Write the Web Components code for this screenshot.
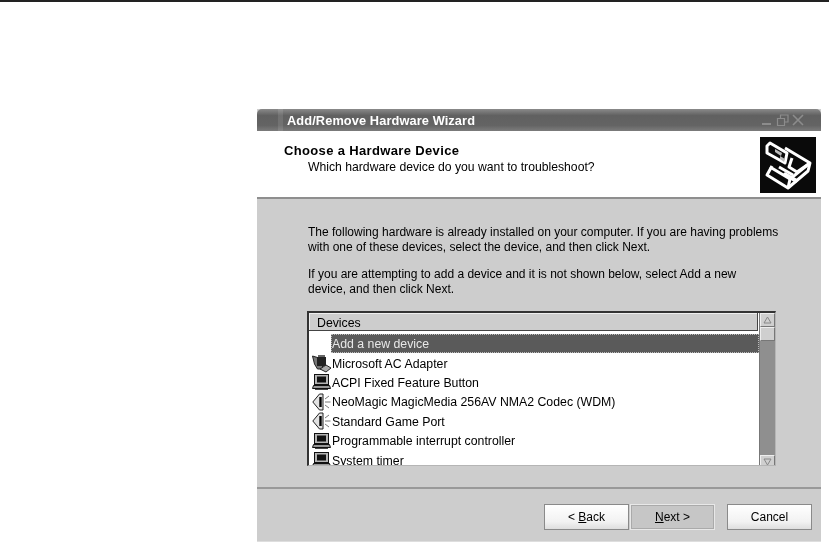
<!DOCTYPE html>
<html>
<head>
<meta charset="utf-8">
<title>Add/Remove Hardware Wizard</title>
<style>
    html, body { margin: 0; padding: 0; background: #fff; }
    body { width: 829px; height: 542px; overflow: hidden; font-family: "Liberation Sans", Arial, sans-serif; }
</style>
</head>
<body>
<page-shot>
    <wizard-window title-text="Add/Remove Hardware Wizard">
        <wizard-header slot="header" heading="Choose a Hardware Device" sub="Which hardware device do you want to troubleshoot?"></wizard-header>
        <p>The following hardware is already installed on your computer. If you are having problems<br>with one of these devices, select the device, and then click Next.</p>
        <p>If you are attempting to add a device and it is not shown below, select Add a new<br>device, and then click Next.</p>
        <device-list>
            <device-row selected>Add a new device</device-row>
            <device-row icon="adapter">Microsoft AC Adapter</device-row>
            <device-row icon="computer">ACPI Fixed Feature Button</device-row>
            <device-row icon="speaker">NeoMagic MagicMedia 256AV NMA2 Codec (WDM)</device-row>
            <device-row icon="speaker">Standard Game Port</device-row>
            <device-row icon="computer">Programmable interrupt controller</device-row>
            <device-row icon="computer">System timer</device-row>
        </device-list>
        <wizard-button slot="buttons" label="Back" key="B" before="&lt; "></wizard-button>
        <wizard-button slot="buttons" label="Next" key="N" after=" &gt;" active></wizard-button>
        <wizard-button slot="buttons" label="Cancel" style="margin-left:11px"></wizard-button>
    </wizard-window>
</page-shot>
<script>
const ICONS = {
    computer: `<svg width="19" height="18" viewBox="0 0 19 18"><rect x="2.5" y="1.5" width="14" height="10" fill="#b5b5b5" stroke="#111"/><rect x="5" y="3.5" width="9" height="6" fill="#111"/><path d="M1.5 12.5h16l1 3H.5z" fill="#999" stroke="#111"/><path d="M3 16.5h13" stroke="#444"/></svg>`,
    speaker: `<svg width="19" height="18" viewBox="0 0 19 18"><path d="M.8 9L7.5 1H11v16H7.5z" fill="#e2e2e2" stroke="#222"/><path d="M8.5 4v10" stroke="#000" stroke-width="2.4"/><path d="M13 6l4-3M13 9h5.5M13 12l4 3" stroke="#777" fill="none"/></svg>`,
    adapter: `<svg width="20" height="20" viewBox="0 0 20 20"><path d="M.5 2l2 8 3 5h5V5z" fill="#777" stroke="#222"/><rect x="5" y="3" width="9" height="9" fill="#222"/><path d="M6 2h7" stroke="#666" stroke-width="2"/><path d="M8 15l6-4 5 3-5 4z" fill="#aaa" stroke="#222"/></svg>`
};

class PageShot extends HTMLElement {
    constructor() {
        super();
        this.attachShadow({ mode: 'open' });
        this.shadowRoot.innerHTML = `
            <style>
                :host { display: block; border-top: 2px solid #222; padding: 107px 8px 0 257px; }
            </style>
            <slot></slot>
        `;
    }
}

class WizardWindow extends HTMLElement {
    constructor() {
        super();
        this.attachShadow({ mode: 'open' });
        const title = this.getAttribute("title-text") || "";
        this.shadowRoot.innerHTML = `
            <style>
                :host {
                    display: flex;
                    flex-direction: column;
                    height: 433px;
                    background: #cdcdcd;
                    font: 12px "Liberation Sans", Arial, sans-serif;
                    color: #000;
                    filter: blur(0.4px);
                }
                #bar {
                    flex: none;
                    display: flex;
                    align-items: center;
                    height: 22px;
                    padding-left: 30px;
                    border-radius: 5px 5px 0 0;
                    background: linear-gradient(#8a8a8a, #606060 30%, #646464 75%, #7c7c7c);
                    color: #fff;
                    font-weight: bold;
                    font-size: 12.8px;
                    letter-spacing: 0.1px;
                    position: relative;
                }
                /* lighter band just before the caption */
                #band { position: absolute; left: 21px; top: 0; bottom: 0; width: 5px; background: rgba(255,255,255,.1); }
                #controls { margin-left: auto; margin-right: 16px; display: block; }
                #middle { flex: 1; padding: 26px 45px 0 51px; display: flex; flex-direction: column; min-height: 0; }
                ::slotted(p) { margin: 0 0 12px; line-height: 15px; white-space: nowrap; }
                #foot {
                    flex: none;
                    height: 55px;
                    box-sizing: border-box;
                    border-top: 2px solid #999;
                    border-bottom: 1px solid #dedede;
                    padding: 15px 9px 0 0;
                    display: flex;
                    justify-content: flex-end;
                    gap: 1px;
                }
            </style>
            <div id="bar">
                <div id="band"></div>
                <span>${title}</span>
                <svg id="controls" width="44" height="14" viewBox="0 0 44 14" fill="none" stroke="#8c8c8c">
                    <path d="M1 11h9" stroke-width="2"/>
                    <path d="M16.5 5.5h7v7h-7zM19.5 5V2h7.5v7h-3" stroke-width="1.2"/>
                    <path d="M32 2l10 10M42 2L32 12" stroke-width="1.6"/>
                </svg>
            </div>
            <slot name="header"></slot>
            <div id="middle"><slot></slot></div>
            <div id="foot"><slot name="buttons"></slot></div>
        `;
    }
}

class WizardHeader extends HTMLElement {
    constructor() {
        super();
        this.attachShadow({ mode: 'open' });
        const heading = this.getAttribute("heading") || "";
        const sub = this.getAttribute("sub") || "";
        this.shadowRoot.innerHTML = `
            <style>
                :host {
                    display: flex;
                    flex: none;
                    height: 68px;
                    box-sizing: border-box;
                    background: #fff;
                    border-bottom: 2px solid #8e8e8e;
                    padding: 6px 5px 0 27px;
                }
                #text { flex: 1; padding-top: 7px; }
                #h { font-weight: bold; color: #000; line-height: 14px; font-size: 13px; letter-spacing: 0.35px; }
                #s { padding-left: 24px; line-height: 15px; margin-top: 2px; font-size: 12.2px; }
                svg { display: block; }
            </style>
            <div id="text">
                <div id="h">${heading}</div>
                <div id="s">${sub}</div>
            </div>
            <svg width="56" height="56" viewBox="0 0 56 56">
                <rect width="56" height="56" fill="#0a0a0a"/>
                <g fill="none" stroke="#fff" stroke-width="3" stroke-linejoin="round">
                    <path d="M25 11l25 15-2 8-20 17-21-13 5-9"/>
                    <path d="M50 26L30 42 10 30"/>
                    <path d="M30 42l-2 9"/>
                    <path d="M32 21l-3 9 8 5 13-9"/>
                    <path d="M19 30l14 8"/>
                    <path d="M7 9l3-3 17 10-2 10-18-10z" fill="#0a0a0a"/>
                </g>
                <path d="M15 12l7 4-1 3-6-4z" fill="#bbb"/>
                <path d="M20 19l5 3-1 3-4-3z" fill="#bbb"/>
                <path d="M22 38l14 8 3-3-14-8z" fill="#fff"/>
            </svg>
        `;
    }
}

class DeviceList extends HTMLElement {
    constructor() {
        super();
        this.attachShadow({ mode: 'open' });
        this.shadowRoot.innerHTML = `
            <style>
                :host {
                    display: grid;
                    grid-template-columns: 1fr 16px;
                    height: 155px;
                    margin: 2px 0 0 -1px;
                    box-sizing: border-box;
                    border: 2px solid #333;
                    border-right: 1px solid #b5b5b5;
                    border-bottom: 1px solid #b5b5b5;
                    overflow: hidden;
                    font-size: 12.3px;
                }
                #left { display: flex; flex-direction: column; min-width: 0; background: #fff; }
                #head {
                    flex: none;
                    height: 18px;
                    box-sizing: border-box;
                    margin-right: 1px;
                    background: #cdcdcd;
                    border-right: 1px solid #444;
                    border-bottom: 1px solid #444;
                    box-shadow: inset 1px 1px 0 #eee;
                    padding: 3px 0 0 8px;
                    line-height: 14px;
                }
                #rows { padding-top: 3px; overflow: hidden; flex: 1; }
                #sb { display: flex; flex-direction: column; background: #8f8f8f; border-left: 1px solid #777; box-sizing: border-box; }
                .btn {
                    flex: none; height: 14px; box-sizing: border-box;
                    background: #cfcfcf;
                    border: 1px solid; border-color: #eee #777 #777 #eee;
                    display: flex; align-items: center; justify-content: center;
                }
                #thumb { height: 14px; }
                #gap { flex: 1; }
                #down { height: 15px; }
            </style>
            <div id="left">
                <div id="head">Devices</div>
                <div id="rows"><slot></slot></div>
            </div>
            <div id="sb">
                <div class="btn"><svg width="9" height="8" viewBox="0 0 9 8"><path d="M4.5 1L8 7H1z" fill="none" stroke="#888"/></svg></div>
                <div class="btn" id="thumb"></div>
                <div id="gap"></div>
                <div class="btn" id="down"><svg width="9" height="8" viewBox="0 0 9 8"><path d="M4.5 7L8 1H1z" fill="none" stroke="#888"/></svg></div>
            </div>
        `;
    }
}

class DeviceRow extends HTMLElement {
    constructor() {
        super();
        this.attachShadow({ mode: 'open' });
        const icon = ICONS[this.getAttribute("icon")] || "";
        this.shadowRoot.innerHTML = `
            <style>
                :host { display: flex; align-items: center; height: 19.4px; white-space: nowrap; }
                #ic { flex: none; width: 19px; height: 18px; margin-left: 3px; }
                #t { flex: 1; height: 19px; line-height: 21px; padding-left: 1px; }
                :host([selected]) #t {
                    background: #5a5a5a;
                    color: #e8e8e8;
                    outline: 1px dotted #bbb;
                    outline-offset: -1px;
                }
                svg { display: block; }
            </style>
            <div id="ic">${icon}</div>
            <div id="t"><slot></slot></div>
        `;
    }
}

class WizardButton extends HTMLElement {
    constructor() {
        super();
        this.attachShadow({ mode: 'open' });
        const label = this.getAttribute("label") || "";
        const hasKey = this.hasAttribute("key");
        this.shadowRoot.innerHTML = `
            <style>
                :host {
                    display: flex;
                    align-items: center;
                    justify-content: center;
                    width: 85px;
                    height: 26px;
                    box-sizing: border-box;
                    border: 1px solid #8a8a8a;
                    background: linear-gradient(#fff, #f2f2f2 70%, #dedede);
                    white-space: pre;
                }
                :host([active]) {
                    background: #c6c6c6;
                    border-color: #e8e8e8;
                    box-shadow: inset 0 0 0 1px #aaa;
                }
            </style>
            <span><span id="b"></span><u id="k"></u><span id="l"></span><span id="a"></span></span>
        `;
        const root = this.shadowRoot;
        root.getElementById("b").textContent = this.getAttribute("before") || "";
        root.getElementById("k").textContent = hasKey ? this.getAttribute("key") : "";
        root.getElementById("l").textContent = hasKey ? label.slice(1) : label;
        root.getElementById("a").textContent = this.getAttribute("after") || "";
    }
}

customElements.define('page-shot', PageShot);
customElements.define('wizard-window', WizardWindow);
customElements.define('wizard-header', WizardHeader);
customElements.define('device-list', DeviceList);
customElements.define('device-row', DeviceRow);
customElements.define('wizard-button', WizardButton);
</script>
</body>
</html>
